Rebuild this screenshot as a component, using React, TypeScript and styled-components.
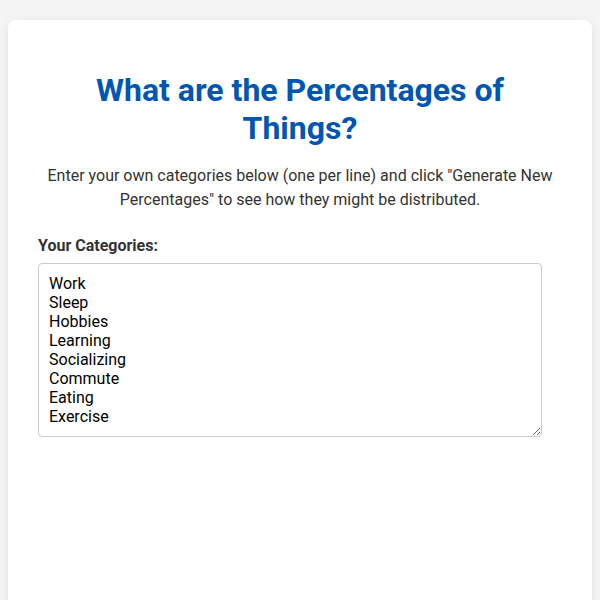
import React, { useState } from "react";
import styled, { createGlobalStyle } from "styled-components";

const GlobalStyle = createGlobalStyle`
  body {
    margin: 0;
    padding: 20px 8px;
    background-color: #f4f4f4;
    font-family: Roboto, "Liberation Sans", Arial, sans-serif;
    color: #333;
  }
`;

const defaultCategories = [
  "Work",
  "Sleep",
  "Hobbies",
  "Learning",
  "Socializing",
  "Commute",
  "Eating",
  "Exercise",
].join("\n");

function App() {
  const [categories, setCategories] = useState(defaultCategories);

  return (
    <>
      <GlobalStyle />
      <StyledCard>
        <StyledTitle>What are the Percentages of Things?</StyledTitle>
        <StyledIntro>
          Enter your own categories below (one per line) and click "Generate
          New Percentages" to see how they might be distributed.
        </StyledIntro>
        <StyledField>
          <StyledLabel htmlFor="categories">Your Categories:</StyledLabel>
          <StyledTextarea
            id="categories"
            rows={8}
            value={categories}
            onChange={(e) => setCategories(e.target.value)}
          />
        </StyledField>
      </StyledCard>
    </>
  );
}

export default App;

const StyledCard = styled.div`
  background-color: #fff;
  border-radius: 8px;
  box-shadow: 0 2px 10px rgba(0, 0, 0, 0.08);
  padding: 30px;
  min-height: 550px;
`;

const StyledTitle = styled.h1`
  color: #0056b3;
  font-size: 32px;
  font-weight: 700;
  line-height: 1.2;
  text-align: center;
  margin: 21px 40px 16px;
`;

const StyledIntro = styled.p`
  font-size: 16px;
  line-height: 24px;
  text-align: center;
  color: #333;
  margin: 0 0 24px;
`;

const StyledField = styled.div`
  display: flex;
  flex-direction: column;
  gap: 8px;
`;

const StyledLabel = styled.label`
  font-weight: 700;
  font-size: 16px;
  color: #333;
`;

const StyledTextarea = styled.textarea`
  width: calc(100% - 20px);
  box-sizing: border-box;
  padding: 10px;
  border: 1px solid #ccc;
  border-radius: 4px;
  font-family: Roboto, "Liberation Sans", Arial, sans-serif;
  font-size: 16px;
  color: #000;
  resize: vertical;
`;
